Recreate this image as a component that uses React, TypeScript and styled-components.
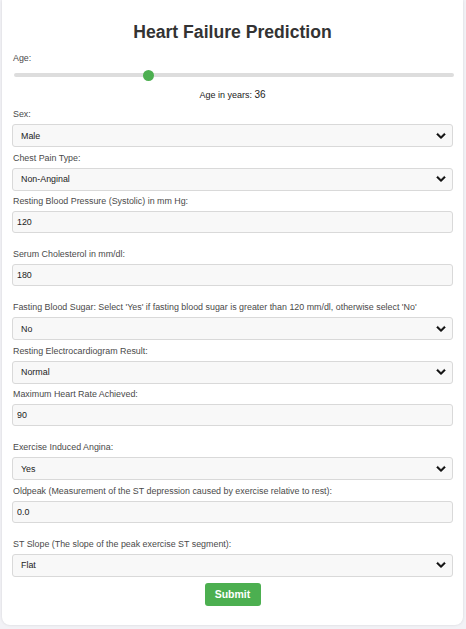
import React, { useState } from "react";
import styled, { createGlobalStyle } from "styled-components";
import { FaChevronDown } from "react-icons/fa";

const GlobalStyle = createGlobalStyle`
  html, body { margin: 0; padding: 0; }
  body {
    background: #f2f2f6;
    font-family: "Liberation Sans", Arial, sans-serif;
  }
`;

const Card = styled.div`
  margin: 0 3px 4px 2px;
  background: #ffffff;
  border-radius: 0 0 8px 8px;
  box-shadow: 0 0 3px rgba(0, 0, 0, 0.12);
  padding: 22px 10px 19px 10px;
  display: flex;
  flex-direction: column;
`;

const Title = styled.h2`
  margin: 0 0 10.5px 0;
  font-size: 17.6px;
  line-height: 20px;
  font-weight: bold;
  color: #333;
  text-align: center;
`;

const Label = styled.label`
  display: block;
  font-size: 8.9px;
  line-height: 11px;
  color: #4a4a4a;
  margin: 0 0 4px 1px;
`;

const Range = styled.input`
  -webkit-appearance: none;
  appearance: none;
  width: 440px;
  margin: 2px 0 0 2px;
  height: 11px;
  background: transparent;
  &::-webkit-slider-runnable-track {
    height: 4px;
    background: #dddddd;
    border-radius: 2px;
  }
  &::-webkit-slider-thumb {
    -webkit-appearance: none;
    width: 11px;
    height: 11px;
    border-radius: 50%;
    background: #4caf50;
    margin-top: -3.5px;
    border: none;
  }
`;

const AgeReadout = styled.div`
  text-align: center;
  font-size: 9px;
  line-height: 11px;
  color: #222;
  margin: 8.5px 0 8px 0;
`;

const AgeValue = styled.span`
  font-size: 10px;
`;

const SelectWrap = styled.div`
  position: relative;
  margin-bottom: 5.5px;
`;

const Select = styled.select`
  -webkit-appearance: none;
  appearance: none;
  box-sizing: border-box;
  width: 100%;
  height: 23px;
  background: #f8f8f8;
  border: 1px solid #d9d9d9;
  border-radius: 3px;
  padding: 0 20px 0 8px;
  font-family: "Liberation Sans", Arial, sans-serif;
  font-size: 8.9px;
  color: #222;
  outline: none;
`;

const Chevron = styled.span`
  position: absolute;
  right: 7px;
  top: 50%;
  transform: translateY(-50%);
  display: flex;
  pointer-events: none;
  color: #111;
  svg {
    stroke: currentColor;
    stroke-width: 28px;
  }
`;

const TextInput = styled.input`
  box-sizing: border-box;
  width: 100%;
  height: 22px;
  background: #f8f8f8;
  border: 1px solid #d9d9d9;
  border-radius: 3px;
  padding: 0 4px;
  font-family: "Liberation Sans", Arial, sans-serif;
  font-size: 8.9px;
  color: #222;
  margin: 0 0 16px 0;
  outline: none;
`;

const SubmitButton = styled.button`
  align-self: center;
  width: 56px;
  height: 23px;
  margin-top: 0.5px;
  background: #4caf50;
  color: #fff;
  border: none;
  border-radius: 3px;
  font-family: "Liberation Sans", Arial, sans-serif;
  font-size: 10.5px;
  font-weight: bold;
  cursor: pointer;
`;

type SelectFieldProps = { label: string; options: string[]; value: string };

const SelectField = ({ label, options, value }: SelectFieldProps) => (
  <>
    <Label>{label}</Label>
    <SelectWrap>
      <Select defaultValue={value}>
        {options.map((o) => (
          <option key={o}>{o}</option>
        ))}
      </Select>
      <Chevron>
        <FaChevronDown size={10} />
      </Chevron>
    </SelectWrap>
  </>
);

type InputFieldProps = { label: string; value: string };

const InputField = ({ label, value }: InputFieldProps) => (
  <>
    <Label>{label}</Label>
    <TextInput type="text" defaultValue={value} />
  </>
);

export default function App() {
  const [age, setAge] = useState(36);
  return (
    <>
      <GlobalStyle />
      <Card>
        <Title>Heart Failure Prediction</Title>
        <Label>Age:</Label>
        <Range
          type="range"
          min={0}
          max={120}
          value={age}
          onChange={(e) => setAge(Number(e.target.value))}
        />
        <AgeReadout>
          Age in years: <AgeValue>{age}</AgeValue>
        </AgeReadout>
        <SelectField label="Sex:" options={["Male", "Female"]} value="Male" />
        <SelectField
          label="Chest Pain Type:"
          options={["Typical Angina", "Atypical Angina", "Non-Anginal", "Asymptomatic"]}
          value="Non-Anginal"
        />
        <InputField label="Resting Blood Pressure (Systolic) in mm Hg:" value="120" />
        <InputField label="Serum Cholesterol in mm/dl:" value="180" />
        <SelectField
          label="Fasting Blood Sugar: Select 'Yes' if fasting blood sugar is greater than 120 mm/dl, otherwise select 'No'"
          options={["No", "Yes"]}
          value="No"
        />
        <SelectField
          label="Resting Electrocardiogram Result:"
          options={["Normal", "ST", "LVH"]}
          value="Normal"
        />
        <InputField label="Maximum Heart Rate Achieved:" value="90" />
        <SelectField label="Exercise Induced Angina:" options={["No", "Yes"]} value="Yes" />
        <InputField
          label="Oldpeak (Measurement of the ST depression caused by exercise relative to rest):"
          value="0.0"
        />
        <SelectField
          label="ST Slope (The slope of the peak exercise ST segment):"
          options={["Up", "Flat", "Down"]}
          value="Flat"
        />
        <SubmitButton type="submit">Submit</SubmitButton>
      </Card>
    </>
  );
}
